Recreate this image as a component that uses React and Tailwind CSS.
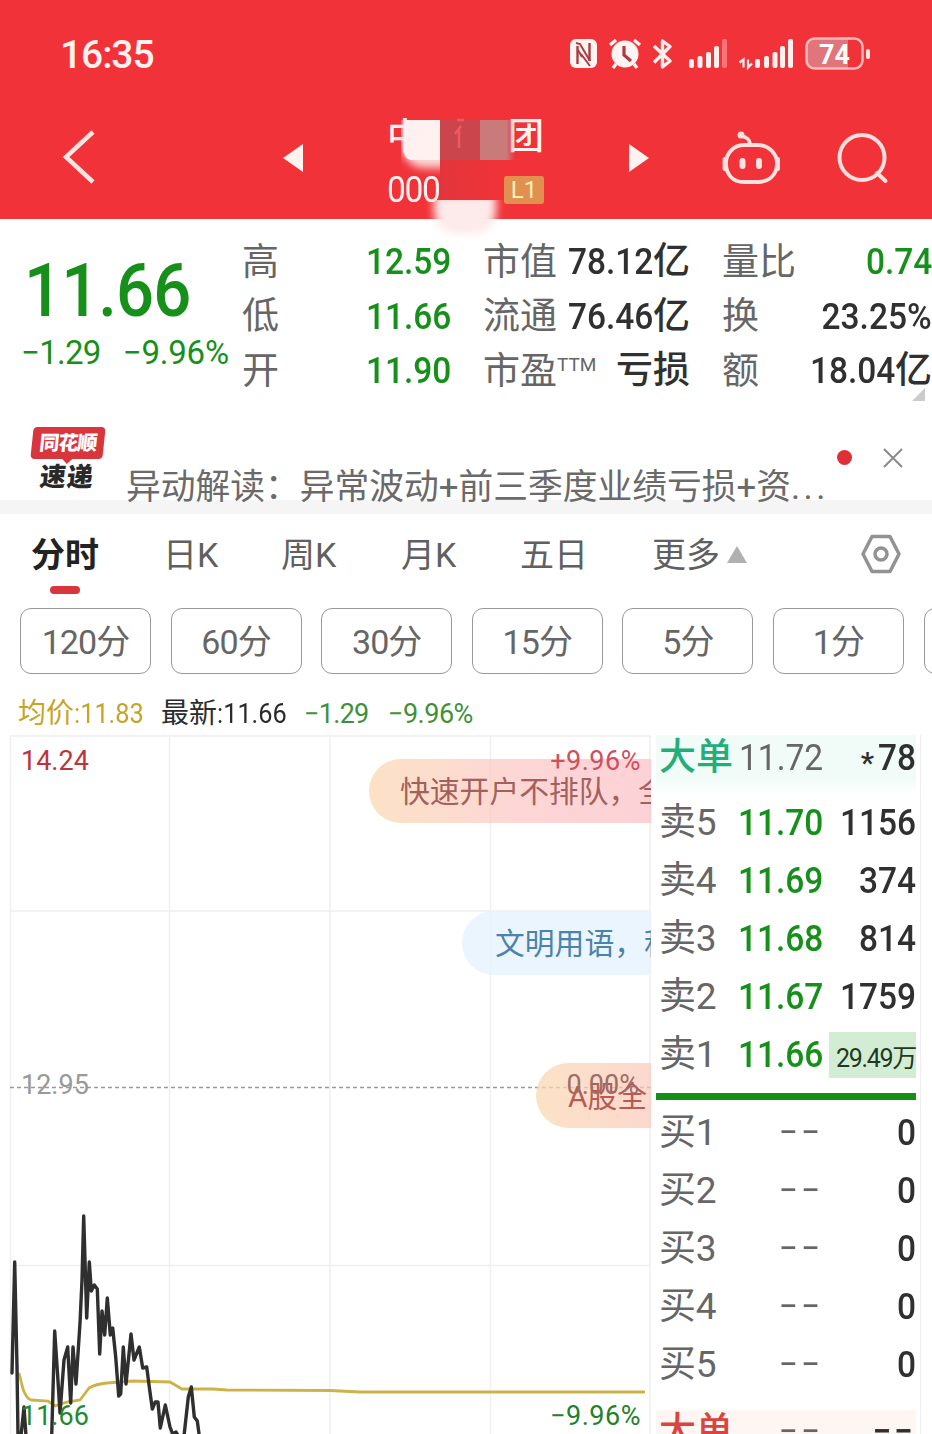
import clsx from 'clsx'

const STATS = [
  [
    { label: '高', value: '12.59', green: true },
    { label: '市值', value: '78.12', unit: '亿' },
    { label: '量比', value: '0.74', green: true },
  ],
  [
    { label: '低', value: '11.66', green: true },
    { label: '流通', value: '76.46', unit: '亿' },
    { label: '换', value: '23.25%' },
  ],
  [
    { label: '开', value: '11.90', green: true },
    { label: '市盈', sup: 'TTM', unit: '亏损' },
    { label: '额', value: '18.04', unit: '亿' },
  ],
]

const PERIODS = ['120分', '60分', '30分', '15分', '5分', '1分']

const ASKS = [
  { label: '卖5', price: '11.70', qty: '1156' },
  { label: '卖4', price: '11.69', qty: '374' },
  { label: '卖3', price: '11.68', qty: '814' },
  { label: '卖2', price: '11.67', qty: '1759' },
  { label: '卖1', price: '11.66', qty: '29.49万', big: true },
]

const BIDS = ['买1', '买2', '买3', '买4', '买5']

const PRICE_LINE =
  'M12 1373 L14.7 1262 L17 1367 L18 1436 M21 1436 L24 1407 L26 1436 M51.7 1436 L54.7 1331 L57.3 1370 L60 1413 L64 1360 L67.7 1347 L70.7 1403 L73 1347 L76 1384 L80 1323 L82 1280 L83.7 1216 L86.7 1318 L89.3 1262 L91.3 1291 L94.3 1285 L97.3 1289 L99.7 1354 L102 1311 L104.7 1335 L107.3 1298 L110.3 1335 L112.7 1328 L115.7 1357 L118.7 1396 L120.7 1394 L123.3 1347 L126 1384 L131 1334 L134 1360 L139.3 1347 L142.7 1368 L146.7 1367 L149.3 1387 L152.3 1409 L155.3 1402 L158 1402 L160.3 1428 L165.3 1405 L170 1427 L172.7 1434 L176 1432 L179 1437 M184 1436 L188.3 1397 L191.3 1387 L194.3 1417 L197.3 1421 L199.3 1436'

const AVG_LINE =
  'M19 1373 L23.3 1390 Q27 1399 31 1400 L48 1401 L55 1406 L67 1402 L80 1400 Q84 1395 89 1388 Q96 1384 107 1383 L133 1381 L170 1382 L182 1389 L213 1389 L227 1390 L330 1390.5 L360 1392 L645 1392'

// Slightly condensed figures, squeezed towards the side they are aligned to
function Num({ left, className, children }) {
  return (
    <span className={clsx('inline-block scale-x-[0.905]', left ? 'origin-left' : 'origin-right', className)}>
      {children}
    </span>
  )
}

function StatusIcons() {
  return (
    <svg className="h-[40px] w-[304px]" viewBox="568 34 304 40" fill="none">
      {/* nfc */}
      <rect x="570" y="39" width="27" height="29" rx="6" fill="#fff4f2" />
      <path d="M577.500 64V46M589.500 61V43" stroke="#a83c42" strokeWidth="2.400" />
      <path d="M576 43l4 1 10 17M581 54l9 12M578 50l4 7" stroke="#a83c42" strokeWidth="2" />
      {/* alarm */}
      <circle cx="625" cy="54" r="13.5" fill="#fff4f2" />
      <path d="M610 45l6-5M640 45l-6-5M616 64l-3 4M634 64l3 4" stroke="#fff4f2" strokeWidth="3.4" />
      <path d="M624 46v9l7 6" stroke="#a83c42" strokeWidth="3.2" />
      {/* bluetooth */}
      <path d="M654 46l16 15-7.500 6V41l7.500 5.500-16 16" stroke="#ffeeec" strokeWidth="3.4" strokeLinejoin="round" />
      {/* signal 1 */}
      <g fill="#fff0ee">
        <rect x="689" y="59" width="5" height="9" rx="2" />
        <rect x="697.500" y="56" width="5" height="12" rx="2" />
        <rect x="706" y="52" width="5" height="16" rx="2" />
        <rect x="714" y="46" width="5" height="22" rx="2" />
        <rect x="722" y="39" width="5" height="29" rx="2" opacity=".35" />
      </g>
      {/* signal 2 */}
      <path d="M739.500 62.500l4-3v8M752 63.500l-4 4v-8" stroke="#fff0ee" strokeWidth="2.200" />
      <g fill="#fff0ee">
        <rect x="755" y="59" width="5" height="9" rx="2" />
        <rect x="764" y="56" width="5" height="12" rx="2" />
        <rect x="772.500" y="52" width="5" height="16" rx="2" />
        <rect x="780" y="46" width="5" height="22" rx="2" />
        <rect x="788" y="39" width="5" height="29" rx="2" />
      </g>
      {/* battery */}
      <path d="M813 39h35v29h-35a6 6 0 0 1-6-6V45a6 6 0 0 1 6-6z" fill="#e0767b" />
      <rect x="806.500" y="38.500" width="56" height="30" rx="8" stroke="#f9b9b8" strokeWidth="2.500" />
      <rect x="866" y="49" width="4" height="10" rx="2" fill="#ffe9e2" />
      <text x="834.500" y="63.500" textAnchor="middle" fill="#fff" fontSize="27" fontWeight="700" fontFamily="Roboto, sans-serif">74</text>
    </svg>
  )
}

function Header() {
  return (
    <header className="relative h-[219px] bg-[#f13239] text-[#fff1ee]">
      <div className="flex h-[108px] items-center justify-between pr-[60px] pl-[60px]">
        <span className="pt-[2px] text-[39px] leading-[40px] font-medium tracking-[-1.100px]">16:35</span>
        <StatusIcons />
      </div>
      <div className="flex h-[111px] items-start">
        <svg className="mt-[19px] ml-[60px] h-[60px] w-[40px]" viewBox="60 127 40 60" fill="none" stroke="#ffe4e1" strokeWidth="4.500">
          <path d="M93 132L66 157l27 25" />
        </svg>
        <svg className="mt-[34px] ml-[183px] h-[32px] w-[20px]" viewBox="0 0 20 32" fill="#fff3f0">
          <path d="M20 2v28L0 16z" />
        </svg>
        <div className="ml-[84px] w-[157px]">
          <div className="mt-[8px] flex justify-between text-[36px] leading-[42px] font-medium">
            <span>中</span>
            <span>团</span>
          </div>
          <div className="mt-[14px] flex h-[36px] items-center justify-between">
            <Num left className="text-[37px] leading-[36px] tracking-[-1.500px]">000</Num>
            <span className="h-[28px] w-[40px] rounded-[3px] bg-[#e0914f] text-center text-[24px] leading-[28px] text-[#fff0b8]">L1</span>
          </div>
        </div>
        <svg className="mt-[34px] ml-[85px] h-[32px] w-[20px]" viewBox="0 0 20 32" fill="#fff3f0">
          <path d="M0 2v28l20-14z" />
        </svg>
        <svg className="mt-[20px] ml-[71px] h-[60px] w-[62px]" viewBox="719 128 62 60" fill="none" stroke="#ffe2df" strokeWidth="3.800">
          <path d="M743 145h14c11 0 19 9 19 18 0 12-8 19-19 19h-14c-11 0-18-7-18-19 0-9 7-18 18-18z" />
          <path d="M749 145c0-6-3-8-9-9" />
          <circle cx="740" cy="135" r="2.500" fill="#ffe2df" strokeWidth="2" />
          <path d="M723.500 159v10M777 159v10" strokeLinecap="round" />
          <path d="M741.500 161v5M758 161v5" strokeWidth="6" strokeLinecap="round" />
        </svg>
        <svg className="mt-[22px] ml-[53px] h-[60px] w-[60px]" viewBox="834 130 60 60" fill="none" stroke="#ffdedb" strokeWidth="4">
          <circle cx="861" cy="157.500" r="22.500" />
          <path d="M876 173l8.500 8" strokeLinecap="round" />
        </svg>
      </div>

      {/* blurred-out part of the stock name and code */}
      <div className="absolute top-[120px] left-[401px] h-[56px] w-[39px] overflow-hidden">
        <div className="h-[48px] w-[60px] rounded-bl-[24px] bg-[#fbd9d8] blur-[4px]" />
      </div>
      <div className="absolute top-[120px] left-[404px] h-[40px] w-[36px] rounded-bl-[8px] bg-[#fff1ef]" />
      <div className="absolute top-[120px] left-[440px] h-[40px] w-[40px] bg-[#ca464c]" />
      <div className="absolute top-[120px] left-[480px] h-[40px] w-[35px] bg-linear-to-r from-[#c97a7b] from-75% to-[#c97a7b]/0" />
      <svg className="absolute top-[116px] left-[452px] h-[36px] w-[14px]" viewBox="0 0 14 36" fill="none" stroke="#ee5a60" strokeWidth="2.500">
        <path d="M12 4H5M9 10L3 18M7 14v18" />
      </svg>
      <div className="absolute top-[160px] left-[440px] h-[40px] w-[62px] bg-linear-to-r from-[#e2363c] to-[#f13239]" />
      <div className="absolute top-[200px] left-[425px] h-[42px] w-[80px] overflow-hidden">
        <div className="mx-auto mt-[-6px] h-[40px] w-[62px] rounded-b-[22px] bg-[#fdeaea] blur-[4px]" />
      </div>
    </header>
  )
}

function Quote() {
  return (
    <section className="flex h-[181px] pt-[15px]">
      <div className="w-[242px] text-[#16901a]">
        <div className="mt-[11px] pl-[24px] text-[74px] leading-[92px] font-medium tracking-[-1px]">
          <Num left>11.66</Num>
        </div>
        <div className="mt-[-2px] flex gap-[22px] pl-[21px] text-[33px] leading-[36px] tracking-[-0.700px] whitespace-nowrap">
          <span>−1.29</span>
          <span className="tracking-[-0.200px]">−9.96%</span>
        </div>
      </div>
      <div className="relative w-[690px]">
        {STATS.map((row, i) => (
          <div key={i} className="grid h-[54.500px] grid-cols-[209px_207px_210px] gap-x-[32px] text-[37px] leading-[54px]">
            {row.map(s => (
              <div key={s.label} className="flex justify-between whitespace-nowrap">
                <span className="flex pt-[1.500px] text-[#666]">
                  {s.label}
                  {s.sup && <sup className="top-[-7px] text-[19px] leading-[54px]">{s.sup}</sup>}
                </span>
                <span className={clsx('flex pt-px font-medium', s.green ? 'text-[#16901a]' : 'text-[#303030]')}>
                  {s.value && <Num>{s.value}</Num>}
                  {s.unit}
                </span>
              </div>
            ))}
          </div>
        ))}
        <svg className="absolute right-[7px] bottom-[-1px] h-[13px] w-[13px]" viewBox="0 0 13 13" fill="#ccc">
          <path d="M13 0v13H0z" />
        </svg>
      </div>
    </section>
  )
}

function Notice() {
  return (
    <section className="flex h-[100px] items-start">
      <div className="mt-[27px] ml-[32px] w-[72px] text-center font-black">
        <div className="relative h-[32px] -skew-x-6 rounded-[4px] bg-[#d8363c] text-[20px] leading-[32px] tracking-[-1px] text-white">
          同花顺
          <svg className="absolute top-[31px] left-[31px] h-[6px] w-[12px]" viewBox="0 0 12 6" fill="#d8363c">
            <path d="M0 0h12L6 6z" />
          </svg>
        </div>
        <div className="mt-[3px] -skew-x-6 pr-[2px] text-[26px] leading-[30px] tracking-[1px] text-[#292929]">速递</div>
      </div>
      <div className="mt-[65px] ml-[22px] w-[708px] text-[34.750px] leading-[44px] whitespace-nowrap text-[#6a6a6a]">
        异动解读：异常波动+前三季度业绩亏损+资<span className="tracking-[3.500px]">...</span>
      </div>
      <div className="mt-[50px] ml-[3px] h-[15px] w-[15px] rounded-full bg-[#e02f36]" />
      <svg className="mt-[47px] ml-[30px] h-[22px] w-[22px]" viewBox="0 0 22 22" stroke="#8a8a8a" strokeWidth="2">
        <path d="M2 2l18 18M20 2L2 20" />
      </svg>
    </section>
  )
}

function Tabs() {
  return (
    <nav className="flex h-[108px] items-start border-t-[14px] border-[#f5f5f6] pt-[19px] pl-[31px] text-[34px] leading-[44px] text-[#606060]">
      <div className="w-[132px] font-bold text-[#222]">
        分时
        <div className="mt-[9px] ml-[19px] h-[8px] w-[30px] rounded-full bg-[#d7363c]" />
      </div>
      <div className="w-[118px]">日K</div>
      <div className="w-[120px]">周K</div>
      <div className="w-[119px]">月K</div>
      <div className="w-[132px]">五日</div>
      <div className="flex w-[207px] items-center gap-[7px]">
        更多
        <svg className="mt-[-2px] h-[17px] w-[20px]" viewBox="0 0 20 17" fill="#b0b0b0">
          <path d="M10 0l10 17H0z" />
        </svg>
      </div>
      <svg className="h-[42px] w-[44px]" viewBox="0 0 44 42" fill="none" stroke="#929292" strokeWidth="3.500">
        <path d="M13 3.500h18L40 21l-9 17.500H13L4 21z" strokeLinejoin="round" />
        <circle cx="22" cy="21" r="6" />
      </svg>
    </nav>
  )
}

function Periods() {
  return (
    <div className="flex h-[66px] gap-[19.600px] overflow-hidden pl-[20px] text-[34px] text-[#666]">
      {PERIODS.map(p => (
        <div key={p} className="h-[66px] w-[131px] shrink-0 rounded-[11px] border border-[#999] text-center leading-[66px] tracking-[-0.900px]">
          {p}
        </div>
      ))}
      <div className="h-[66px] w-[131px] shrink-0 rounded-[11px] border border-[#999]" />
    </div>
  )
}

function Chart() {
  return (
    <div className="relative h-[699px] w-[651px] shrink-0 overflow-hidden text-[27px] leading-[32px]">
      <svg className="h-[699px] w-[651px]" viewBox="0 735 651 699" fill="none">
        <path d="M10.500 736V1434M169.500 736V1434M330 736V1434M490.500 736V1434M650 736V1434M10 736H651M10 911H651M10 1265.500H651" stroke="#f0f0f0" strokeWidth="1.500" />
        <path d="M10 1087.500H651" stroke="#999" strokeWidth="1.500" strokeDasharray="4 3" />
        <path d={AVG_LINE} stroke="#cdb347" strokeWidth="2.800" />
        <path d={PRICE_LINE} stroke="#2f2f2f" strokeWidth="3.400" strokeLinejoin="round" strokeLinecap="round" />
      </svg>

      {/* scrolling comments */}
      <div className="absolute top-[24px] left-[369px] h-[64px] w-[400px] rounded-full bg-linear-to-r from-[#fbd8b3]/75 via-[#fcc4c4]/70 via-40% to-[#fcb9c6]/70 pl-[31px] text-[29.800px] leading-[65px] whitespace-nowrap text-[#a5605c]">
        快速开户不排队，全程
      </div>
      <div className="absolute top-[176px] left-[462px] h-[64px] w-[400px] rounded-full bg-[#e6f3fc]/80 pl-[33px] text-[29.800px] leading-[65px] whitespace-nowrap text-[#4a83ab]">
        文明用语，积极
      </div>
      <div className="absolute top-[328px] left-[536px] h-[65px] w-[400px] rounded-full bg-linear-to-r from-[#fbd8b3]/75 via-[#fcc4bc]/70 via-35% to-[#fcb9c6]/70 pl-[32px] text-[29.800px] leading-[68px] whitespace-nowrap text-[#b85a54]">
        A股全
      </div>

      <span className="absolute top-[10px] left-[21px] text-[#bd343b]">14.24</span>
      <span className="absolute top-[10px] right-[10px] tracking-[0.500px] text-[#cf4f5b]">+9.96%</span>
      <span className="absolute top-[334px] left-[21px] text-[#999]">12.95</span>
      <span className="absolute top-[334px] right-[12px] text-[#9b6f68]">0.00%</span>
      <span className="absolute top-[665px] left-[21px] text-[#23892d]">11.66</span>
      <span className="absolute top-[665px] right-[10px] tracking-[0.500px] text-[#23802b]">−9.96%</span>
    </div>
  )
}

function OrderRow({ label, price, qty, big, priceClass, qtyClass }) {
  return (
    <div className="flex h-[57.900px] items-center text-[37px] leading-[40px]">
      <span className="w-[68px] pl-[3px] tracking-[-0.300px] whitespace-nowrap text-[#666]">{label}</span>
      <span className={clsx('w-[99px] text-right', priceClass)}>
        <Num>{price}</Num>
      </span>
      <span className={clsx('ml-auto text-right', qtyClass)}>{big ? qty : <Num>{qty}</Num>}</span>
    </div>
  )
}

function OrderBook() {
  return (
    <div className="ml-[5px] h-[699px] w-[265px] overflow-hidden border-r border-[#eee] pr-[4px]">
      <div className="flex h-[45px] items-center bg-[#f1fcf8] pl-[3px] text-[37px] leading-[45px]">
        <span className="w-[80px] font-medium text-[#22ae79]">大单</span>
        <Num left className="text-[#666]">11.72</Num>
        <span className="relative top-[5px] ml-auto text-[30px] font-medium text-[#303030]">*</span>
        <Num className="font-medium text-[#303030]">78</Num>
      </div>
      <div className="h-[14px] bg-linear-to-b from-[#f1fcf8] to-white" />
      {ASKS.map(a => (
        <OrderRow
          key={a.label}
          {...a}
          priceClass="font-medium text-[#16901a]"
          qtyClass={a.big
            ? 'h-[46px] w-[87px] bg-[#d3edd4] pt-[7px] text-[25px] tracking-[-1.300px] whitespace-nowrap text-[#1f3a20]'
            : 'font-medium text-[#303030]'}
        />
      ))}
      <div className="mt-[10px] mb-[4px] h-[7px] bg-[#168f17]" />
      {BIDS.map(b => (
        <OrderRow
          key={b}
          label={b}
          price="−−"
          qty="0"
          priceClass="tracking-[3.500px] text-[#666]"
          qtyClass="font-medium text-[#303030]"
        />
      ))}
      <div className="mt-[16px] flex h-[50px] items-start bg-[#fdf6f2] text-[37px] leading-[44px] whitespace-nowrap">
        <span className="w-[76px] pl-[3px] font-medium text-[#d9443f]">大单</span>
        <span className="w-[91px] text-right tracking-[3.500px] text-[#666]">
          <Num>−−</Num>
        </span>
        <span className="ml-auto font-medium tracking-[3px] text-[#303030]">
          <Num>−−</Num>
        </span>
      </div>
    </div>
  )
}

export default function App() {
  return (
    <div className="h-[1434px] w-[932px] overflow-hidden bg-white font-[Roboto,'Noto_Sans_CJK_SC',sans-serif]">
      <Header />
      <Quote />
      <Notice />
      <Tabs />
      <Periods />
      <div className="flex h-[61px] items-center pt-[19px] pl-[18px] text-[28px] leading-[40px] whitespace-nowrap">
        <span className="w-[143px] text-[#c6a524]">
          均价<Num left>:11.83</Num>
        </span>
        <span className="w-[143px] text-[#2b2b2b]">
          最新<Num left>:11.66</Num>
        </span>
        <span className="w-[84px] text-[27px] tracking-[-0.700px] text-[#3f9138]">−1.29</span>
        <span className="text-[27px] tracking-[-0.500px] text-[#3f9138]">−9.96%</span>
      </div>
      <div className="flex">
        <Chart />
        <OrderBook />
      </div>
    </div>
  )
}
